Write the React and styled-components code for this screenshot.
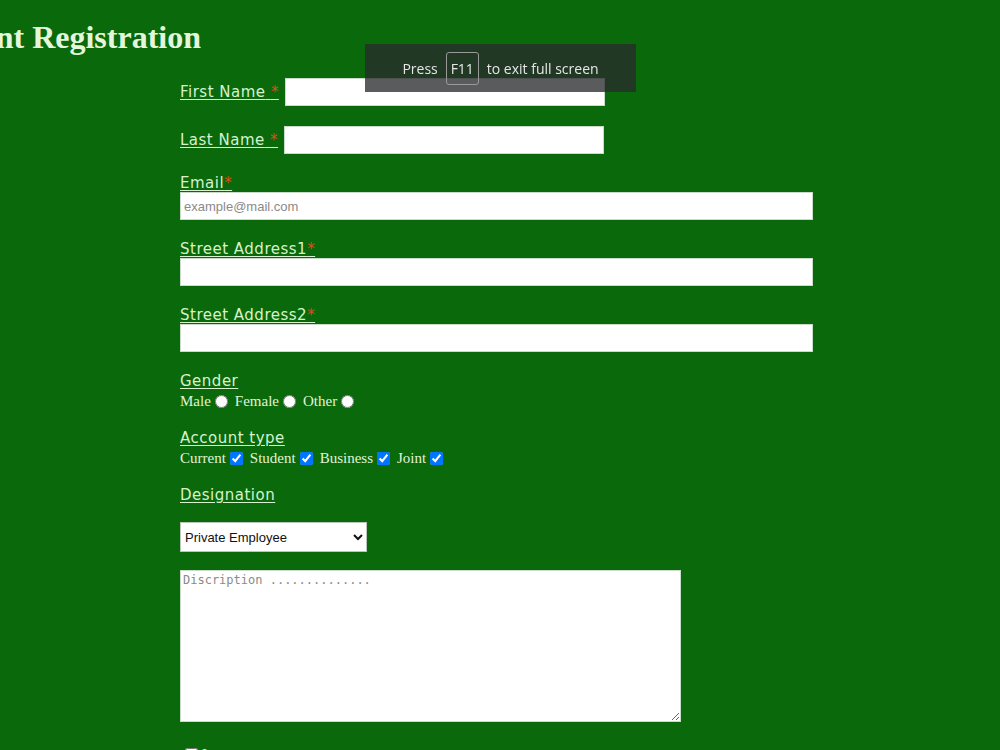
import React from 'react';
import styled, { createGlobalStyle } from 'styled-components';

const GlobalStyle = createGlobalStyle`
    html, body {
        margin: 0;
        padding: 0;
        background: #0a690a;
        overflow: hidden;
    }
`

const Page = styled.div`
    min-height: 750px;
    background: #0a690a;
    color: #d6f2ce;
`

const TitleBar = styled.div`
    display: flex;
    justify-content: flex-end;
    width: 201px;
    margin-top: 19px;
`

const Title = styled.h1`
    margin: 0;
    white-space: nowrap;
    font-family: "Liberation Serif", serif;
    font-size: 32px;
    line-height: 37px;
    font-weight: bold;
    color: #e4f6dc;
`

const Form = styled.form`
    display: flex;
    flex-direction: column;
    align-items: flex-start;
    padding-left: 180px;
`

const InlineRow = styled.div`
    display: flex;
    align-items: center;
    gap: 6px;
    margin-top: ${p => p.$top}px;
`

const Block = styled.div`
    display: flex;
    flex-direction: column;
    align-items: flex-start;
    margin-top: ${p => p.$top || 20}px;
`

const Label = styled.label`
    font-family: "DejaVu Sans", sans-serif;
    font-size: 15px;
    letter-spacing: 0.5px;
    line-height: 18px;
    color: #d6f2ce;
    text-decoration: underline;
    text-underline-offset: 2px;
    white-space: pre;
`

const Star = styled.span`
    color: #d8501c;
`

const TextInput = styled.input`
    box-sizing: border-box;
    width: ${p => p.$w}px;
    height: 28px;
    margin: 0;
    padding: 2px 3px;
    border: 1px solid #c9dcc9;
    background: #fff;
    font-family: "Liberation Sans", Arial, sans-serif;
    font-size: 13px;
    color: #333;
    &::placeholder {
        color: #8a8a8a;
    }
`

const Options = styled.div`
    display: flex;
    align-items: center;
    gap: 7px;
    margin-top: 2px;
    font-family: "Liberation Serif", serif;
    font-size: 15px;
    line-height: 19px;
    color: #e0f4d8;
`

const Option = styled.label`
    display: flex;
    align-items: center;
    gap: 4px;
    input {
        margin: 0;
        width: 13px;
        height: 13px;
    }
`

const Select = styled.select`
    box-sizing: border-box;
    width: 187px;
    height: 30px;
    margin-top: 18px;
    padding: 0;
    border: 1px solid #b9c9b9;
    background: #fff;
    font-family: "Liberation Sans", Arial, sans-serif;
    font-size: 13px;
    color: #111;
`

const TextArea = styled.textarea`
    box-sizing: border-box;
    width: 501px;
    height: 152px;
    margin-top: 18px;
    padding: 2px 2px;
    border: 1px solid #c9dcc9;
    background: #fff;
    font-family: "DejaVu Sans Mono", monospace;
    font-size: 12px;
    &::placeholder {
        color: #8a8a8a;
    }
`

const AgreeRow = styled.label`
    display: flex;
    align-items: center;
    gap: 4px;
    margin-top: 24px;
    font-family: "Liberation Serif", serif;
    font-size: 15px;
    color: #e0f4d8;
    input {
        margin: 0 0 0 5px;
        width: 13px;
        height: 13px;
    }
`

const FullscreenHint = styled.div`
    position: fixed;
    top: 44px;
    left: 365px;
    width: 271px;
    height: 48px;
    display: flex;
    align-items: center;
    justify-content: center;
    gap: 8px;
    background: rgba(40, 42, 44, 0.77);
    font-family: "Open Sans", "Noto Sans", sans-serif;
    font-size: 14px;
    color: #e6e6e6;
`

const Key = styled.span`
    display: inline-flex;
    align-items: center;
    justify-content: center;
    width: 31px;
    height: 31px;
    border: 1.5px solid #9a9a9a;
    border-radius: 3px;
`

const FieldLabel = ({ children, star, spaced }) => (
    <Label>{children}{spaced ? ' ' : ''}{star && <Star>*</Star>}</Label>
)

const App = () => {
    return (
        <Page>
            <GlobalStyle />
            <TitleBar>
                <Title>Account Registration</Title>
            </TitleBar>
            <Form onSubmit={e => e.preventDefault()}>
                <InlineRow $top={22}>
                    <FieldLabel star spaced>First Name</FieldLabel>
                    <TextInput $w={320} type="text" />
                </InlineRow>
                <InlineRow $top={20}>
                    <FieldLabel star spaced>Last Name</FieldLabel>
                    <TextInput $w={320} type="text" />
                </InlineRow>
                <Block>
                    <FieldLabel star>Email</FieldLabel>
                    <TextInput $w={633} type="email" placeholder="example@mail.com" />
                </Block>
                <Block>
                    <FieldLabel star>Street Address1</FieldLabel>
                    <TextInput $w={633} type="text" />
                </Block>
                <Block>
                    <FieldLabel star>Street Address2</FieldLabel>
                    <TextInput $w={633} type="text" />
                </Block>
                <Block>
                    <FieldLabel>Gender</FieldLabel>
                    <Options>
                        <Option>Male<input type="radio" name="gender" /></Option>
                        <Option>Female<input type="radio" name="gender" /></Option>
                        <Option>Other<input type="radio" name="gender" /></Option>
                    </Options>
                </Block>
                <Block $top={18}>
                    <FieldLabel>Account type</FieldLabel>
                    <Options>
                        <Option>Current<input type="checkbox" defaultChecked /></Option>
                        <Option>Student<input type="checkbox" defaultChecked /></Option>
                        <Option>Business<input type="checkbox" defaultChecked /></Option>
                        <Option>Joint<input type="checkbox" defaultChecked /></Option>
                    </Options>
                </Block>
                <Block $top={18}>
                    <FieldLabel>Designation</FieldLabel>
                    <Select defaultValue="private">
                        <option value="private">Private Employee</option>
                        <option value="government">Government Employee</option>
                        <option value="business">Business</option>
                        <option value="student">Student</option>
                    </Select>
                    <TextArea placeholder="Discription .............." />
                </Block>
                <AgreeRow>
                    <input type="checkbox" />
                    I agree
                </AgreeRow>
            </Form>
            <FullscreenHint>
                <span>Press</span>
                <Key>F11</Key>
                <span>to exit full screen</span>
            </FullscreenHint>
        </Page>
    );
}

export default App;
